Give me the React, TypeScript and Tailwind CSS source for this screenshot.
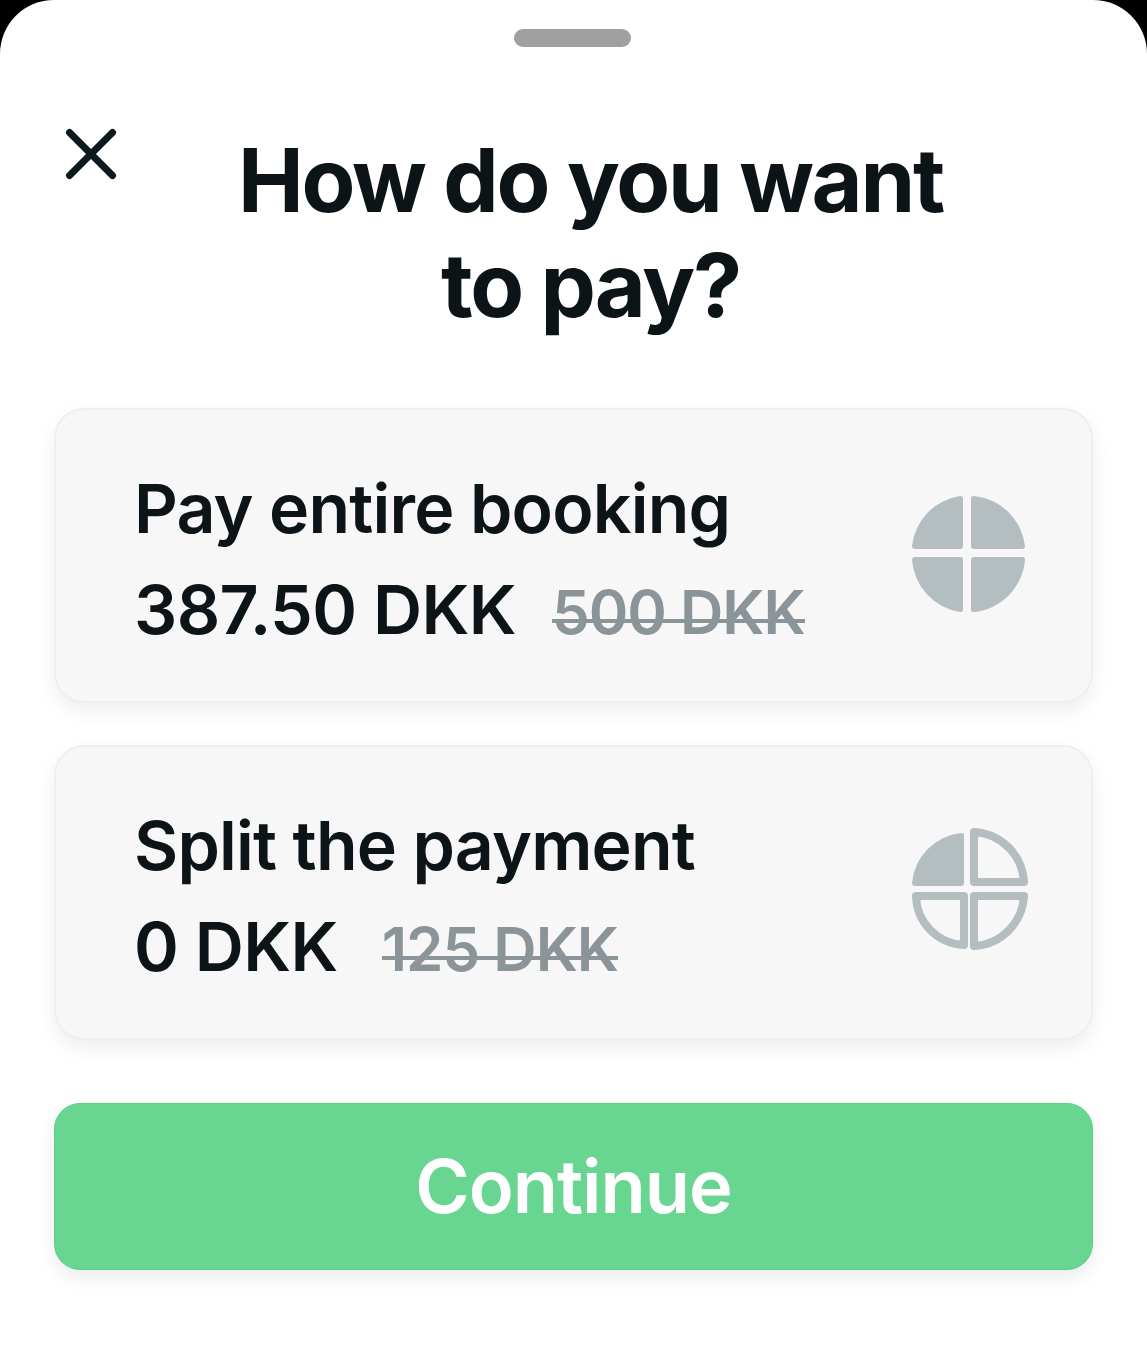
import type { ReactNode } from 'react';
import { X } from 'lucide-react';

function FullIcon() {
	return (
		<svg width="116" height="118" viewBox="0 0 116 118" className="-mt-[4px] shrink-0 text-[#b4bec1]" fill="currentColor">
			<path d="M52 3 Q52 1 49 1 A57 57 0 0 0 1 51 Q1 54 4 54 L49 54 Q52 54 52 51 Z" />
			<path d="M60 3 Q60 1 63 1 A57 57 0 0 1 114 51 Q114 54 111 54 L63 54 Q60 54 60 51 Z" />
			<path d="M52 115 Q52 117 49 117 A57 57 0 0 1 1 65 Q1 62 4 62 L49 62 Q52 62 52 65 Z" />
			<path d="M60 115 Q60 117 63 117 A57 57 0 0 0 114 65 Q114 62 111 62 L63 62 Q60 62 60 65 Z" />
		</svg>
	);
}

function SplitIcon() {
	return (
		<svg width="118" height="122" viewBox="0 0 118 122" className="-mt-[7px] -mr-[2px] shrink-0 text-[#b4bec1]" fill="none" stroke="currentColor" strokeWidth="8" strokeLinejoin="round">
			<path d="M53 7 Q53 5 50 5 A55 55 0 0 0 1 55 Q1 58 4 58 L50 58 Q53 58 53 55 Z" fill="currentColor" stroke="none" />
			<path d="M63 4 A53 53 0 0 1 113 54 L63 54 Z" />
			<path d="M5 68 L53 68 L53 117 A50 50 0 0 1 5 68 Z" />
			<path d="M63 68 L113 68 A53 53 0 0 1 63 118 Z" />
		</svg>
	);
}

function OptionCard({ title, price, oldPrice, icon, gapClass }: { title: string; price: string; oldPrice: string; icon: ReactNode; gapClass: string }) {
	return (
		<div className="flex h-[295px] items-center justify-between rounded-[30px] border-2 border-[#efefef] bg-[#f7f7f8] pl-[78px] pr-[64px] shadow-[0_8px_20px_rgba(0,0,0,0.07)]">
			<div className="pt-[8px]">
				<div className="text-[68px] leading-[76px] font-semibold tracking-[-0.8px] text-[#0c1417]">{title}</div>
				<div className={`mt-[25px] flex items-baseline ${gapClass}`}>
					<span className="text-[68px] leading-[76px] font-semibold tracking-[-0.6px] text-[#0c1417]">{price}</span>
					<span className="relative text-[60px] leading-[76px] font-semibold tracking-[-1px] text-[#8b9599]">
						{oldPrice}
						<span className="absolute inset-x-0 top-[45px] h-[4px] bg-[#8b9599]" />
					</span>
				</div>
			</div>
			{icon}
		</div>
	);
}

function App() {
	return (
		<div className="min-h-[1372px] bg-black font-['Inter',sans-serif]">
			<div className="flex h-[1372px] flex-col rounded-t-[54px] bg-white px-[54px] pt-[29px]">
				<div className="mx-auto h-[18px] w-[117px] -translate-x-px rounded-full bg-[#a0a0a0]" />
				<div className="relative mt-[81px]">
					<X className="absolute top-[-17px] left-[-6px] text-[#0c1a20]" size={86} strokeWidth={1.95} />
					<h1 className="pl-[34px] text-center text-[88px] leading-[105px] font-bold tracking-[-2.2px] text-[#0c1417]">
						How do you want
						<br />
						to pay?
					</h1>
				</div>
				<div className="mt-[70px] flex flex-col gap-[42px]">
					<OptionCard title="Pay entire booking" price="387.50 DKK" oldPrice="500 DKK" icon={<FullIcon />} gapClass="gap-[36px]" />
					<OptionCard title="Split the payment" price="0 DKK" oldPrice="125 DKK" icon={<SplitIcon />} gapClass="gap-[44px]" />
				</div>
				<button className="mt-[63px] h-[167px] rounded-[26px] border border-[#5fcf88] bg-[#68d591] text-[74px] font-semibold tracking-[-1px] text-white shadow-[0_8px_18px_rgba(0,0,0,0.08)]">
					Continue
				</button>
			</div>
		</div>
	);
}

export default App;
